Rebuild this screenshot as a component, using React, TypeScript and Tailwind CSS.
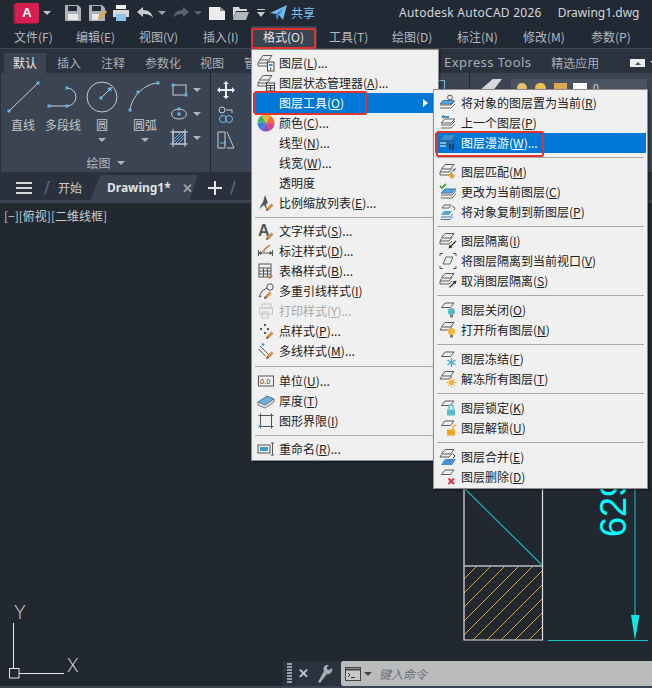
import React from "react";

const cjk = { fontFamily: '"Noto Sans CJK SC", "Noto Sans", sans-serif' };

function Ic({ children, box = 18 }: { children: React.ReactNode; box?: number }) {
  return (
    <svg viewBox="0 0 18 18" width={box} height={box} fill="none" className="shrink-0">
      {children}
    </svg>
  );
}

const G = "#5a5a5a";
const Slab = ({ y = 0, c = G, fill = "none" }: { y?: number; c?: string; fill?: string }) => (
  <path d={`M6 ${2 + y}h9l-3.5 4.5H2.5z`} stroke={c} fill={fill} strokeWidth="1" />
);
const Stack = ({ n = 3, c = G }: { n?: number; c?: string }) => (
  <g stroke={c} strokeWidth="1" fill="none">
    <path d="M6 1.5h9l-3.5 4.5H2.5z" />
    {n > 1 && <path d="M2.5 6.5 1 9h9l3-3.5" />}
    {n > 2 && <path d="M1 9.5 1 12h9l3-3" />}
  </g>
);
const Pencil = ({ x = 0, y = 0 }: { x?: number; y?: number }) => (
  <g transform={`translate(${x} ${y})`}>
    <path d="M9 17l1-3 4.5-4.5 2 2L12 16z" fill="#d98a3a" />
    <path d="M9 17l1-3 2 2z" fill="#6b5b4a" />
  </g>
);
const Bulb = ({ c }: { c: string }) => (
  <g>
    <circle cx="12.5" cy="10.5" r="3.6" fill={c} />
    <rect x="11" y="14" width="3" height="2.5" fill="#777" />
  </g>
);
const Lock = ({ c, open }: { c: string; open?: boolean }) => (
  <g>
    <rect x="8" y="10.5" width="8" height="6" fill={c} />
    <path d={open ? "M14 10.5V8a2 2 0 0 1 3.5-1" : "M10 10.5V8a2 2 0 0 1 4 0v2.5"} stroke={c} strokeWidth="1.4" />
  </g>
);

const wedges = ["#f0b429", "#ef6c3a", "#e0457b", "#8e4fc4", "#3f7fdc", "#3cb56a"];
function Wheel() {
  return (
    <Ic>
      {wedges.map((c, i) => {
        const a = (i * Math.PI) / 3 - Math.PI / 2 - 0.5;
        const b = a + Math.PI / 3;
        const r = 8.5;
        return (
          <path
            key={c}
            d={`M9 9L${9 + r * Math.cos(a)} ${9 + r * Math.sin(a)}A${r} ${r} 0 0 1 ${9 + r * Math.cos(b)} ${9 + r * Math.sin(b)}z`}
            fill={c}
          />
        );
      })}
    </Ic>
  );
}

const icons: Record<string, React.ReactNode> = {
  layer: (
    <Ic>
      <Stack />
      <rect x="10.5" y="8" width="6.5" height="9" fill="#f0f0f0" stroke="#444" />
      <rect x="12" y="10" width="3.5" height="2" fill="#3d8fd0" />
      <path d="M13.7 13.5v2.5" stroke="#444" />
    </Ic>
  ),
  state: (
    <Ic>
      <Stack />
      <rect x="9.5" y="9" width="8" height="8" fill="#f0f0f0" stroke="#444" />
      <path d="M9.5 11.5h8M9.5 14h8M13.5 11.5V17" stroke="#444" />
    </Ic>
  ),
  wheel: <Wheel />,
  scale: (
    <Ic>
      <path d="M8 1l3 8 -2 1 1 6-3-5-5 4 4-7z" fill="#555" />
      <Pencil />
    </Ic>
  ),
  text: (
    <Ic>
      <text x="1" y="14" fontSize="16" fontWeight="700" fill="#555" fontFamily="Liberation Sans">A</text>
      <Pencil y="1" />
    </Ic>
  ),
  dim: (
    <Ic>
      <path d="M1.5 8v6M15.5 8v6M2 11h13M2 11l2-1.5v3zM15 11l-2-1.5v3z" stroke="#555" />
      <path d="M6 10l2-3 5-4" stroke="#c77a30" strokeWidth="1.6" />
    </Ic>
  ),
  table: (
    <Ic>
      <rect x="2" y="2" width="12" height="13" stroke="#555" />
      <path d="M2 6h12M2 9h12M2 12h12M6.5 6v9M10.5 6v9" stroke="#555" />
      <path d="M11 16l3-3 2 1-3 3z" fill="#c77a30" />
    </Ic>
  ),
  leader: (
    <Ic>
      <circle cx="13" cy="5" r="3.2" stroke="#555" />
      <path d="M10 6 5 9 2 15l2.5-1" stroke="#555" />
      <Pencil x="-2" />
    </Ic>
  ),
  print: (
    <Ic>
      <g stroke="#c4c4c4">
        <rect x="5" y="2" width="9" height="4" />
        <rect x="2.5" y="6" width="13" height="6" />
        <rect x="5" y="10" width="6" height="6" />
      </g>
    </Ic>
  ),
  point: (
    <Ic>
      <g fill="#555">
        <rect x="7" y="2" width="2" height="2" />
        <rect x="3" y="6" width="2" height="2" />
        <rect x="10" y="6" width="2" height="2" />
        <rect x="7" y="10" width="2" height="2" />
      </g>
      <Pencil />
    </Ic>
  ),
  mline: (
    <Ic>
      <path d="M3 4l9 9M1.5 7l7 7" stroke="#555" />
      <path d="M5 1.5l2 2" stroke="#3d9ad9" strokeWidth="2" />
      <Pencil />
    </Ic>
  ),
  units: (
    <Ic>
      <rect x="1.5" y="4" width="15" height="10" stroke="#555" />
      <text x="3" y="12" fontSize="7.5" fill="#444" fontFamily="Liberation Sans">0.0</text>
    </Ic>
  ),
  thick: (
    <Ic>
      <path d="M1 10l9-6 7 3-9 6z" fill="#6fb1de" stroke="#3a78a8" />
      <path d="M1 10v3l7 3 9-6V7l-9 6z" fill="#e6e6e6" stroke="#777" />
    </Ic>
  ),
  limits: (
    <Ic>
      <rect x="3.5" y="3.5" width="11" height="11" stroke="#555" />
      <path d="M1.5 3.5h4M3.5 1.5v4M12.5 3.5h4M14.5 1.5v4M1.5 14.5h4M3.5 12.5v4M12.5 14.5h4M14.5 12.5v4" stroke="#555" />
      <rect x="2" y="13" width="2.5" height="2.5" fill="#3d9ad9" />
    </Ic>
  ),
  rename: (
    <Ic>
      <rect x="1" y="5" width="12" height="8" stroke="#555" />
      <rect x="3" y="7" width="8" height="4" fill="#3d9ad9" />
      <path d="M14 3h3M14 15h3M15.5 3v12" stroke="#555" />
    </Ic>
  ),
  toCurrent: (
    <Ic>
      <circle cx="11" cy="3.5" r="2.4" stroke="#555" />
      <path d="M4 6.5h11l-3 3.5H1z" fill="#58a5da" stroke="#3a78a8" />
      <path d="M1 11h11l4-4M1 14h11l4-4" stroke="#666" />
    </Ic>
  ),
  prev: (
    <Ic>
      <path d="M2 2.5 5 .8v1.2h5v2H5v1.2z" fill="#3d8fd0" />
      <path d="M6 5h10l-4 4H2zM2 11h10l4-4M2 14h10l4-4" stroke="#666" />
    </Ic>
  ),
  walk: (
    <Ic>
      <path d="M5 1h11l-3 5H2z" fill="#3f8ec9" />
      <path d="M2 6h11l3-5v8l-3 3H2z" fill="#1b6aa8" />
      <path d="M1 9h6M1 12h6" stroke="#fff" />
      <rect x="10" y="10" width="2" height="6" fill="#123f66" />
      <rect x="13" y="10" width="2" height="6" fill="#123f66" />
    </Ic>
  ),
  match: (
    <Ic>
      <Stack />
      <path d="M9 12l3-3 4 4-3 3z" fill="#e2a43a" />
      <path d="M13 8l3-3 1 1-3 3z" fill="#666" />
    </Ic>
  ),
  change: (
    <Ic>
      <path d="M1 3l2 2 4-4" stroke="#3fa34d" strokeWidth="1.8" />
      <path d="M6 6h11l-4 4H2z" fill="#58a5da" stroke="#3a78a8" />
      <path d="M2 12h11l4-4M2 15h11l4-4" stroke="#666" />
    </Ic>
  ),
  copyNew: (
    <Ic>
      <path d="M5 2h7l-2 3H3zM13 3l3 2-1 2" stroke="#666" />
      <path d="M5 8h8l-3 4H2z" fill="#58a5da" />
      <path d="M2 14h9l3-3M2 16.5h9l3-3" stroke="#3a78a8" />
    </Ic>
  ),
  isolate: (
    <Ic>
      <Stack />
      <path d="M17 9l-6 6" stroke="#333" strokeWidth="1.2" />
      <path d="M9.5 16.5l4-1-3-3z" fill="#333" />
    </Ic>
  ),
  isoVp: (
    <Ic>
      <path d="M1 4V1.5h3M14 1.5h3V4M1 14v2.5h3M14 16.5h3V14" stroke="#555" />
      <path d="M7 5h7l-3 7H4z" stroke="#666" />
    </Ic>
  ),
  unisolate: (
    <Ic>
      <Stack />
      <path d="M10.5 15.5l5.5-5.5" stroke="#333" strokeWidth="1.2" />
      <path d="M17.5 8.5l-4 1 3 3z" fill="#333" />
    </Ic>
  ),
  off: (
    <Ic>
      <Slab />
      <Bulb c="#56b8c9" />
    </Ic>
  ),
  allOn: (
    <Ic>
      <Stack n={2} />
      <Bulb c="#f2b63c" />
    </Ic>
  ),
  freeze: (
    <Ic>
      <Slab />
      <g stroke="#4cb3c7" strokeWidth="1.4">
        <path d="M12.5 8v9M8.5 10.2l8 4.6M16.5 10.2l-8 4.6" />
      </g>
    </Ic>
  ),
  thaw: (
    <Ic>
      <Stack n={2} />
      <circle cx="12.5" cy="12.5" r="3" fill="#f2b63c" />
      <path d="M12.5 7.5v1.5M12.5 16v1.5M7.5 12.5H9M16 12.5h1.5M9 9l1 1M15 15l1 1M16 9l-1 1M10 15l-1 1" stroke="#e2a43a" />
    </Ic>
  ),
  lock: (
    <Ic>
      <Slab />
      <Lock c="#58bccb" />
    </Ic>
  ),
  unlock: (
    <Ic>
      <Slab />
      <Lock c="#efa526" open />
    </Ic>
  ),
  merge: (
    <Ic>
      <Stack n={2} />
      <path d="M14 6l2 2-2 2" stroke="#333" />
      <path d="M6 11h11l-4 6H2z" fill="#4a90d0" />
    </Ic>
  ),
  del: (
    <Ic>
      <Slab />
      <path d="M9.5 10.5l5.5 5.5M15 10.5 9.5 16" stroke="#dd3344" strokeWidth="2" />
    </Ic>
  ),
};

type Entry =
  | { label: string; key?: string; tail?: string; icon?: string; active?: boolean; dim?: boolean; arrow?: boolean }
  | "sep"
  | "sep8"
  | "sep10";

const mainMenu: Entry[] = [
  { label: "图层", key: "L", tail: "...", icon: "layer" },
  { label: "图层状态管理器", key: "A", tail: "...", icon: "state" },
  { label: "图层工具", key: "O", active: true, arrow: true },
  { label: "颜色", key: "C", tail: "...", icon: "wheel" },
  { label: "线型", key: "N", tail: "..." },
  { label: "线宽", key: "W", tail: "..." },
  { label: "透明度" },
  { label: "比例缩放列表", key: "E", tail: "...", icon: "scale" },
  "sep8",
  { label: "文字样式", key: "S", tail: "...", icon: "text" },
  { label: "标注样式", key: "D", tail: "...", icon: "dim" },
  { label: "表格样式", key: "B", tail: "...", icon: "table" },
  { label: "多重引线样式", key: "I", icon: "leader" },
  { label: "打印样式", key: "Y", tail: "...", icon: "print", dim: true },
  { label: "点样式", key: "P", tail: "...", icon: "point" },
  { label: "多线样式", key: "M", tail: "...", icon: "mline" },
  "sep10",
  { label: "单位", key: "U", tail: "...", icon: "units" },
  { label: "厚度", key: "T", icon: "thick" },
  { label: "图形界限", key: "I", icon: "limits" },
  "sep8",
  { label: "重命名", key: "R", tail: "...", icon: "rename" },
];

const subMenu: Entry[] = [
  { label: "将对象的图层置为当前", key: "R", icon: "toCurrent" },
  { label: "上一个图层", key: "P", icon: "prev" },
  { label: "图层漫游", key: "W", tail: "...", icon: "walk", active: true },
  "sep",
  { label: "图层匹配", key: "M", icon: "match" },
  { label: "更改为当前图层", key: "C", icon: "change" },
  { label: "将对象复制到新图层", key: "P", icon: "copyNew" },
  "sep",
  { label: "图层隔离", key: "I", icon: "isolate" },
  { label: "将图层隔离到当前视口", key: "V", icon: "isoVp" },
  { label: "取消图层隔离", key: "S", icon: "unisolate" },
  "sep",
  { label: "图层关闭", key: "O", icon: "off" },
  { label: "打开所有图层", key: "N", icon: "allOn" },
  "sep",
  { label: "图层冻结", key: "F", icon: "freeze" },
  { label: "解冻所有图层", key: "T", icon: "thaw" },
  "sep",
  { label: "图层锁定", key: "K", icon: "lock" },
  { label: "图层解锁", key: "U", icon: "unlock" },
  "sep",
  { label: "图层合并", key: "E", icon: "merge" },
  { label: "图层删除", key: "D", icon: "del" },
];

function MenuList({ items, iconW }: { items: Entry[]; iconW: string }) {
  return (
    <>
      {items.map((e, i) =>
        typeof e === "string" ? (
          <div key={i} className={`${e === "sep8" ? "h-[8px]" : e === "sep10" ? "h-[10px]" : "h-[9px]"} flex items-center px-[2px]`}>
            <div className="h-px w-full bg-[#a9a9a9]" />
          </div>
        ) : (
          <div
            key={i}
            className={`h-5 flex items-center ${e.active ? "bg-[#0078d7] text-white" : e.dim ? "text-[#a8a8a8]" : "text-[#222222]"}`}
          >
            <div className={`${iconW} flex justify-center shrink-0`}>{e.icon ? icons[e.icon] : null}</div>
            <span className="whitespace-pre flex-1">
              {e.label}
              {e.key ? (
                <>
                  (<span className="underline">{e.key}</span>)
                </>
              ) : null}
              {e.tail}
            </span>
            {e.arrow && <span className="mr-[9px] w-0 h-0 border-y-[4px] border-y-transparent border-l-[5px] border-l-white" />}
          </div>
        )
      )}
    </>
  );
}

const Caret = ({ c = "border-t-[#c6cad0]" }: { c?: string }) => (
  <span className={`inline-block w-0 h-0 border-x-[4px] border-x-transparent border-t-[4px] ${c}`} />
);

function TitleBar() {
  return (
    <div className="h-[26px] flex items-center bg-[#212934] relative whitespace-nowrap [&>*]:shrink-0">
      <div className="ml-[15px] w-[24px] h-[20px] bg-[#d61f4e] flex items-center justify-center text-white font-bold text-[13px] rounded-[1px] shadow-[-2px_1px_0_#8c1635]" style={{ fontFamily: "Liberation Sans" }}>
        A
      </div>
      <span className="ml-[4px] flex"><Caret /></span>
      <svg className="ml-[14px]" width="16" height="16" viewBox="0 0 16 16"><path d="M0 0h13l3 3v13H0z" fill="#aeb2b7" /><rect x="3" y="1" width="9" height="5" fill="#212934" /><rect x="3" y="9" width="10" height="6" fill="#e8e8e8" /></svg>
      <svg className="ml-[8px]" width="18" height="16" viewBox="0 0 18 16"><path d="M0 0h13l3 3v13H0z" fill="#aeb2b7" /><rect x="3" y="1" width="9" height="5" fill="#212934" /><rect x="3" y="9" width="7" height="6" fill="#e8e8e8" /><path d="M8 15l2-4 6-6 2 2-6 6z" fill="#e5a83f" /></svg>
      <svg className="ml-[6px]" width="16" height="16" viewBox="0 0 16 16"><rect x="3" y="0" width="10" height="4" fill="#eee" /><rect x="0" y="5" width="16" height="7" fill="#d8d8d8" /><rect x="3" y="9" width="10" height="7" fill="#8cc4ea" /></svg>
      <svg className="ml-[8px]" width="16" height="12" viewBox="0 0 16 12"><path d="M0 5l6-5v3c6 0 9 3 10 8-2-3-5-4-10-4v3z" fill="#c8ccd1" /></svg>
      <span className="ml-[5px] flex"><Caret c="border-t-[#9aa0a8]" /></span>
      <svg className="ml-[7px]" width="16" height="12" viewBox="0 0 16 12"><path d="M16 5l-6-5v3C4 3 1 6 0 11c2-3 5-4 10-4v3z" fill="#596270" /></svg>
      <span className="ml-[5px] flex"><Caret c="border-t-[#596270]" /></span>
      <svg className="ml-[7px]" width="16" height="13" viewBox="0 0 16 13"><path d="M0 0h11l5 4v9H0z" fill="#ececec" /><path d="M11 0v4h5z" fill="#8d8d8d" /></svg>
      <svg className="ml-[8px]" width="16" height="13" viewBox="0 0 16 13"><path d="M0 0h6l1 2h7v2H3L0 12z" fill="#d8d8d8" /><path d="M3 5h13l-3 8H0z" fill="#b4b8bd" /></svg>
      <svg className="ml-[8px]" width="9" height="8" viewBox="0 0 9 8"><path d="M0 0h8v1H0zM0 3h8L4 8z" fill="#c6cad0" /></svg>
      <svg className="ml-[4px]" width="17" height="16" viewBox="0 0 17 16"><path d="M0 8 17 0l-4 15-4-5-2 5-1-6z" fill="#6fb9ee" /><path d="M6 9 14 3l-5 7-2 5z" fill="#3f84bb" /></svg>
      <span className="ml-[4px] text-[12px] text-[#7cc4f2]" style={cjk}>共享</span>
      <span className="ml-[84px] text-[12px] text-[#d3d6da] tracking-[0.25px]" style={{ fontFamily: '"Noto Sans", sans-serif' }}>Autodesk AutoCAD 2026</span>
      <span className="ml-[16px] text-[12px] text-[#d3d6da]" style={{ fontFamily: '"Noto Sans", sans-serif' }}>Drawing1.dwg</span>
    </div>
  );
}

const menuBar = [
  { t: "文件(F)", w: "w-[62px]" },
  { t: "编辑(E)", w: "w-[63px]" },
  { t: "视图(V)", w: "w-[64px]" },
  { t: "插入(I)", w: "w-[60px]" },
  { t: "格式(O)", w: "w-[66px]" },
  { t: "工具(T)", w: "w-[63px]" },
  { t: "绘图(D)", w: "w-[65px]" },
  { t: "标注(N)", w: "w-[66px]" },
  { t: "修改(M)", w: "w-[68px]" },
  { t: "参数(P)", w: "w-[60px]" },
];

function MenuBar() {
  return (
    <div className="h-[23px] flex items-center bg-[#212934] border-b border-[#3f4753] pl-[2px] text-[12px] text-[#b4b9c0]" style={cjk}>
      {menuBar.map((m) => (
        <div key={m.t} className={`${m.w} shrink-0 h-[22px] pl-[12px] flex items-center whitespace-nowrap ${m.t === "格式(O)" ? "bg-[#3b4452] text-[#e4e6e9]" : ""}`}>
          {m.t}
        </div>
      ))}
    </div>
  );
}

function RibbonTabs() {
  return (
    <div className="h-[24px] flex items-end bg-[#2a323e] text-[12px] text-[#a9aeb6] whitespace-nowrap [&>*]:shrink-0" style={cjk}>
      <div className="ml-[4px] w-[42px] h-[20px] bg-[#3b4452] text-[#e6e8ea] flex items-center justify-center">默认</div>
      <div className="ml-[11px] h-[20px] flex items-center">插入</div>
      <div className="ml-[20px] h-[20px] flex items-center">注释</div>
      <div className="ml-[20px] h-[20px] flex items-center">参数化</div>
      <div className="ml-[19px] h-[20px] flex items-center">视图</div>
      <div className="ml-[20px] h-[20px] flex items-center">管理</div>
      <div className="ml-[176px] h-[20px] flex items-center text-[13px] tracking-[0.4px]" style={{ fontFamily: '"Noto Sans", sans-serif' }}>Express Tools</div>
      <div className="ml-[20px] h-[20px] flex items-center">精选应用</div>
      <div className="ml-[31px] h-[20px] flex items-center gap-[5px]">
        <div className="w-[15px] h-[8px] bg-[#eeeeee] flex items-center justify-center">
          <span className="w-0 h-0 border-x-[3px] border-x-transparent border-b-[3px] border-b-[#555]" />
        </div>
        <Caret />
      </div>
    </div>
  );
}

const Dot = ({ x, y }: { x: number; y: number }) => <rect x={x - 1.5} y={y - 1.5} width="3" height="3" fill="#5fb4e8" />;

function Tool({ w, label, caret, children }: { w: string; label: string; caret?: boolean; children: React.ReactNode }) {
  return (
    <div className={`${w} flex flex-col items-center`}>
      <div className="h-[38px] flex items-center">{children}</div>
      <div className="mt-[1px] text-[12px] leading-[16px] text-[#c3c7cc] whitespace-nowrap" style={cjk}>{label}</div>
      {caret && <div className="mt-[3px] leading-[0]"><Caret c="border-t-[#aeb2b8]" /></div>}
    </div>
  );
}

function Ribbon() {
  return (
    <div className="h-[99px] bg-[#2a323e] flex">
      <div className="ml-px w-[209px] shrink-0 bg-[#3b4452] flex flex-col">
        <div className="h-[77px] flex pt-[5px]">
          <Tool w="w-[44px]" label="直线">
            <svg width="34" height="34" viewBox="0 0 34 34"><path d="M3 31 32 3" stroke="#c8ccd1" /><Dot x={3} y={31} /><Dot x={32} y={3} /></svg>
          </Tool>
          <Tool w="w-[36px]" label="多段线">
            <svg width="36" height="34" viewBox="0 0 36 34"><path d="M4 26h18a9 9 0 0 0 0-18" stroke="#c8ccd1" fill="none" /><Dot x={4} y={26} /><Dot x={22} y={26} /><Dot x={22} y={8} /></svg>
          </Tool>
          <Tool w="w-[42px]" label="圆" caret>
            <svg width="34" height="34" viewBox="0 0 34 34"><circle cx="17" cy="17" r="15" stroke="#c8ccd1" fill="none" /><path d="M17 17l8-8" stroke="#c8ccd1" /><path d="M22 8l5-1-1 5z" fill="#5fb4e8" /><Dot x={16} y={18} /></svg>
          </Tool>
          <Tool w="w-[44px]" label="圆弧" caret>
            <svg width="34" height="34" viewBox="0 0 34 34"><path d="M2 30C4 16 16 4 30 3" stroke="#c8ccd1" fill="none" /><Dot x={2} y={30} /><Dot x={10} y={12} /><Dot x={30} y={3} /></svg>
          </Tool>
          <div className="flex flex-col pt-[3px] gap-[6px] ml-[3px]">
            <div className="flex items-center h-[18px] gap-[5px]">
              <svg width="18" height="16" viewBox="0 0 18 16"><rect x="3" y="3" width="13" height="10" stroke="#c8ccd1" fill="none" /><Dot x={3} y={3} /><Dot x={16} y={13} /></svg>
              <Caret c="border-t-[#aeb2b8]" />
            </div>
            <div className="flex items-center h-[18px] gap-[5px]">
              <svg width="18" height="16" viewBox="0 0 18 16"><ellipse cx="9" cy="8" rx="7.5" ry="5" stroke="#c8ccd1" fill="none" /><Dot x={9} y={3} /><Dot x={9} y={8} /></svg>
              <Caret c="border-t-[#aeb2b8]" />
            </div>
            <div className="flex items-center h-[18px] gap-[5px]">
              <svg width="18" height="18" viewBox="0 0 18 18"><rect x="3" y="3" width="12" height="12" stroke="#c8ccd1" fill="none" /><path d="M0 3h18M0 15h18M3 0v18M15 0v18" stroke="#c8ccd1" /><path d="M4 13 13 4M6 14l8-8M4 10l6-6M9 14l5-5" stroke="#5fb4e8" /></svg>
              <Caret c="border-t-[#aeb2b8]" />
            </div>
          </div>
        </div>
        <div className="flex-1 flex items-center justify-center gap-[6px] pt-[3px] text-[12px] text-[#b4b9c0]" style={cjk}>
          绘图 <Caret c="border-t-[#aeb2b8]" />
        </div>
      </div>
      <div className="w-px bg-[#1e252e] shrink-0" />
      <div className="flex-1 min-w-0 bg-[#3b4452] flex">
        <div className="w-[30px] shrink-0 flex flex-col items-center pt-[8px] gap-[7px]">
          <svg width="18" height="18" viewBox="0 0 18 18"><path d="M9 0l3 3H10v5h5V6l3 3-3 3v-2h-5v5h2l-3 3-3-3h2v-5H3v2L0 9l3-3v2h5V3H6z" fill="#e8eaec" /></svg>
          <svg width="18" height="18" viewBox="0 0 18 18"><circle cx="5" cy="4" r="3" stroke="#c8ccd1" fill="none" /><path d="M9 4h6v3" stroke="#c8ccd1" fill="none" /><circle cx="6" cy="13" r="3.5" stroke="#6fb9ee" fill="none" /><circle cx="12" cy="13" r="3.5" stroke="#6fb9ee" fill="none" /></svg>
          <svg width="18" height="18" viewBox="0 0 18 18"><path d="M1 1h7v16H1zM10 1l7 16H10" stroke="#c8ccd1" fill="none" /><path d="M3 12h6M7 10l2 2-2 2" stroke="#6fb9ee" fill="none" /></svg>
        </div>
        {/* layer panel part that shows above the submenu */}
        <div className="flex-1 min-w-0 flex">
          <div className="ml-[192px] mt-[7px] w-[12px] h-[12px] border-t border-r border-[#6fb9ee] shrink-0" />
          <div className="ml-[24px] w-px bg-[#1e252e] shrink-0" />
          <div className="ml-[9px] mt-[6px] w-[23px] h-[12px] bg-[#d8d8d8] [clip-path:polygon(60%_0,100%_0,60%_100%,0_100%)] shrink-0" />
          <div className="ml-[9px] mt-[6px] w-[136px] h-[20px] bg-[#4a5362] flex items-start pl-[6px] pt-[4px] shrink-0">
            <span className="w-[10px] h-[10px] rounded-full bg-[#efc06a]" />
            <span className="ml-[8px] w-[11px] h-[10px] rounded-full bg-[#e8c04a]" />
            <span className="ml-[8px] w-[13px] h-[10px] bg-[#d9ab4c]" />
            <span className="ml-[6px] w-[14px] h-[10px] bg-white" />
            <span className="ml-[6px] text-[10px] leading-[10px] text-[#ddd]">0</span>
          </div>
        </div>
      </div>
    </div>
  );
}

function TabStrip() {
  return (
    <div className="h-[31px] flex flex-col bg-[#2a313c] pt-[3px]">
      <div className="h-[25px] flex items-center text-[12px] text-[#c9ccd1]" style={cjk}>
        <div className="ml-[16px] w-[16px] flex flex-col gap-[3px]">
          <div className="h-[2px] bg-[#d5d7da]" />
          <div className="h-[2px] bg-[#d5d7da]" />
          <div className="h-[2px] bg-[#d5d7da]" />
        </div>
        <div className="ml-[12px] w-[6px] h-[14px] [clip-path:polygon(70%_0,100%_0,30%_100%,0_100%)] bg-[#59616d]" />
        <span className="ml-[8px]">开始</span>
        <div className="ml-[8px] w-[108px] h-[25px] bg-[#3b4452] [clip-path:polygon(10%_0,100%_0,92%_100%,0_100%)] flex items-center">
          <span className="ml-[17px] font-bold text-[12px] text-[#dfe2e5]" style={{ fontFamily: '"Noto Sans", sans-serif' }}>Drawing1*</span>
          <span className="ml-[11px] text-[13px] font-bold text-[#9aa0a8] leading-none">✕</span>
        </div>
        <svg className="ml-[10px]" width="14" height="14" viewBox="0 0 14 14"><path d="M7 0v14M0 7h14" stroke="#e4e6e9" strokeWidth="2" /></svg>
        <div className="ml-[8px] w-[6px] h-[14px] [clip-path:polygon(70%_0,100%_0,30%_100%,0_100%)] bg-[#59616d]" />
      </div>
      <div className="h-[3px] bg-[#3b4452]" />
    </div>
  );
}

function Canvas() {
  const hatch: number[] = [];
  for (let k = 1029; k <= 1183; k += 14) hatch.push(k);
  return (
    <div className="flex-1 relative bg-[#212830]">
      <div className="pl-[4px] pt-[4px] text-[12px] text-[#c9ccd1] whitespace-nowrap" style={cjk}>[−][俯视][二维线框]</div>
      {/* drawing canvas: page coordinates */}
      <svg className="absolute left-0 top-[-203px] pointer-events-none" width="652" height="688" viewBox="0 0 652 688">
        <defs>
          <clipPath id="hb">
            <rect x="464" y="566" width="78" height="74" />
          </clipPath>
        </defs>
        <g clipPath="url(#hb)" stroke="#d9a520" strokeWidth="1">
          {hatch.map((k) => (
            <line key={k} x1={k - 700} y1={700} x2={k - 400} y2={400} />
          ))}
        </g>
        <path d="M464 480V640H542.5V480" stroke="#e2e2e2" strokeWidth="1.2" fill="none" />
        <path d="M464 566H542.5" stroke="#b8bcc0" strokeWidth="1.5" />
        <path d="M465 489 542 565" stroke="#16b3b8" strokeWidth="1.2" />
        <path d="M548 640.5H648M635 480V620" stroke="#14c4c8" strokeWidth="1" />
        <path d="M635 640 631 615H639.5z" fill="#11e6e6" />
        <text x="0" y="0" transform="translate(626 537) rotate(-90)" fontSize="36" fill="#0ff" fontFamily="Liberation Sans">629</text>
        <g stroke="#e6e6e6" strokeWidth="1" fill="none">
          <path d="M13.5 623V668M19 673.5H64" />
          <rect x="9.5" y="668.5" width="9.5" height="9.5" />
        </g>
        <text x="14" y="619" fontSize="18" fontWeight="200" fill="#e6e6e6" fontFamily="Inter">Y</text>
        <text x="67" y="672" fontSize="18" fontWeight="200" fill="#e6e6e6" fontFamily="Inter">X</text>
      </svg>
      {/* command line */}
      <div className="absolute right-0 bottom-[2px] left-[283px] h-[25px] flex">
        <div className="w-[58px] bg-[#2a3240] flex items-center">
          <div className="ml-[4px] w-[5px] h-[21px] bg-[repeating-linear-gradient(to_bottom,#9ba0a6_0,#9ba0a6_2px,transparent_2px,transparent_3px)]" />
          <span className="ml-[6px] text-[13px] font-bold text-[#c2c5c9] leading-none">✕</span>
          <svg className="ml-[8px]" width="16" height="18" viewBox="0 0 16 18"><path d="M1 17l2 1 7-9c3 1 6-2 5-6l-3 2-2-1V2l2-2C8-1 5 3 7 6z" fill="#a7abb0" /></svg>
        </div>
        <div className="flex-1 bg-[#b9bbbd] rounded-l-[2px] flex items-center">
          <svg className="ml-[4px]" width="16" height="14" viewBox="0 0 16 14"><rect x=".5" y=".5" width="15" height="13" fill="#c8c9ca" stroke="#444" /><path d="M0 2.5h16" stroke="#444" strokeWidth="2" /><path d="M3 6l2 2-2 2M6 10.5h4" stroke="#333" fill="none" /></svg>
          <span className="ml-[3px] flex"><Caret c="border-t-[#444]" /></span>
          <span className="ml-[7px] text-[12px] italic text-[#6c6e71]" style={cjk}>键入命令</span>
        </div>
      </div>
      <div className="absolute left-0 right-0 bottom-0 h-[2px] bg-[#3b4452]" />
    </div>
  );
}

export default function App() {
  return (
    <div className="w-[652px] h-[688px] relative overflow-hidden flex flex-col bg-[#212830]">
      <TitleBar />
      <MenuBar />
      <RibbonTabs />
      <Ribbon />
      <TabStrip />
      <Canvas />

      {/* 格式 dropdown */}
      <div className="absolute left-[251px] top-[49px] w-[188px] h-[412px] bg-[#f0f0f0] border border-[#8f8f8f] py-[3px] px-px text-[12px] shadow-[1px_1px_2px_rgba(0,0,0,.5)]" style={cjk}>
        <MenuList items={mainMenu} iconW="w-[26px]" />
      </div>
      {/* 图层工具 submenu */}
      <div className="absolute left-[433px] top-[89px] w-[215px] h-[400px] bg-[#f0f0f0] border border-[#8f8f8f] py-[3px] px-px text-[12px] shadow-[1px_1px_2px_rgba(0,0,0,.5)]" style={cjk}>
        <MenuList items={subMenu} iconW="w-[26px]" />
      </div>

      {/* annotation boxes */}
      <div className="absolute left-[251px] top-[28px] w-[65px] h-[21px] border-2 border-[#e0342f] rounded-[2px]" />
      <div className="absolute left-[254px] top-[91px] w-[113px] h-[24px] border-2 border-[#e0342f] rounded-[2px]" />
      <div className="absolute left-[436px] top-[131px] w-[108px] h-[26px] border-2 border-[#e0342f] rounded-[2px]" />
    </div>
  );
}
